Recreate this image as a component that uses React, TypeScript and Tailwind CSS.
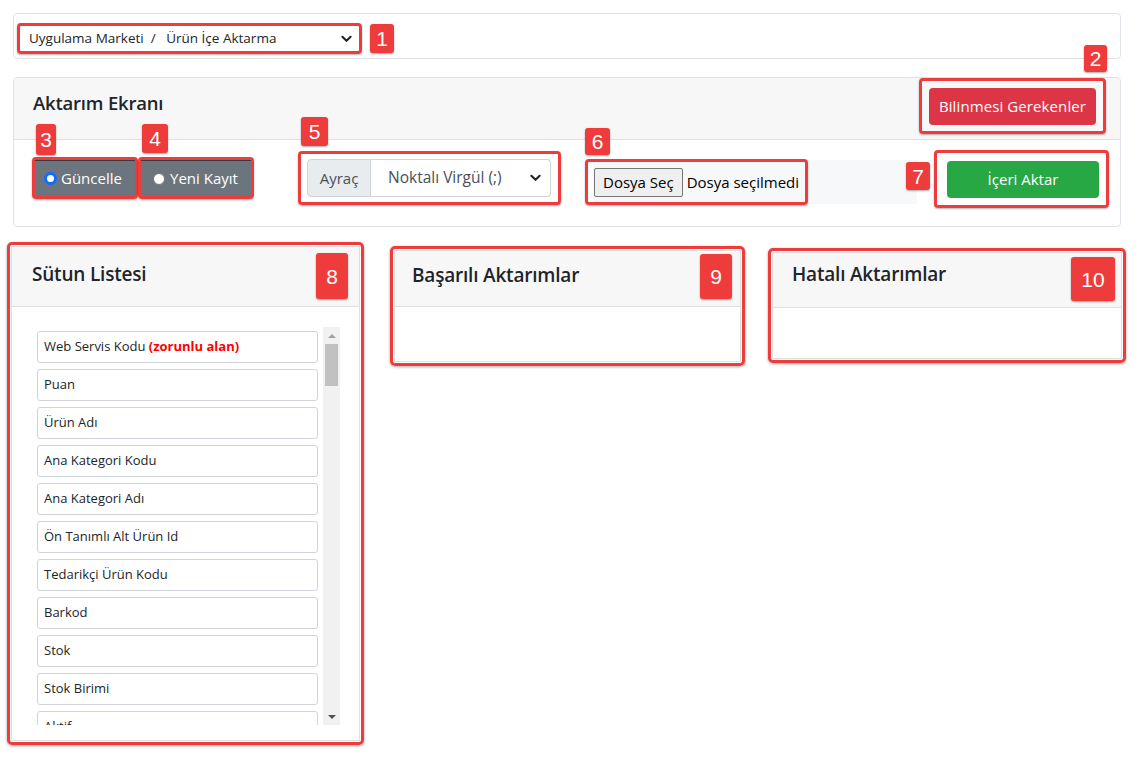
import React from "react";

const Badge = ({ n, className }: { n: string; className: string }) => (
  <div
    className={
      "absolute flex items-center justify-center rounded-[3px] bg-[#ee3b3b] text-white text-[21px] leading-none shadow-[0_1px_2px_rgba(0,0,0,0.35)] " +
      className
    }
    style={{ fontFamily: '"Liberation Sans", Arial, sans-serif' }}
  >
    {n}
  </div>
);

const items = [
  "Puan",
  "Ürün Adı",
  "Ana Kategori Kodu",
  "Ana Kategori Adı",
  "Ön Tanımlı Alt Ürün Id",
  "Tedarikçi Ürün Kodu",
  "Barkod",
  "Stok",
  "Stok Birimi",
  "Aktif",
];

const Chevron = () => (
  <svg width="11" height="8" viewBox="0 0 12 8">
    <path d="M1.5 1.5 6 6l4.5-4.5" fill="none" stroke="#222" strokeWidth="2.2" strokeLinecap="round" strokeLinejoin="round" />
  </svg>
);

export default function App() {
  return (
    <div
      className="w-[1137px] h-[764px] bg-white text-[#212529] overflow-hidden relative"
      style={{ fontFamily: '"Open Sans", "Noto Sans", sans-serif' }}
    >
      {/* Top breadcrumb card */}
      <div className="ml-[13px] mt-[13px] w-[1108px] h-[46px] border border-[#dee2e6] rounded-[4px] px-[3px] pt-[9px]">
        <div className="relative w-[345px] h-[31px] border-[3px] border-[#ee3b3b] rounded-[4px] flex items-center justify-between pl-[9px] pr-[7px] shadow-[0_1px_2px_rgba(0,0,0,0.3)]">
          <span className="text-[13.5px] whitespace-pre">Uygulama Marketi  /   Ürün İçe Aktarma</span>
          <Chevron />
          <Badge n="1" className="left-[350px] top-[-2px] w-[24px] h-[29px]" />
        </div>
      </div>

      {/* Aktarım Ekranı card */}
      <div className="ml-[13px] mt-[18px] w-[1108px] h-[150px] border border-[#dee2e6] rounded-[4px] flex flex-col">
        <div className="h-[62px] bg-[#f7f7f7] border-b border-[#dfdfdf] flex items-center justify-between pl-[19px] pr-[14px] rounded-t-[4px]">
          <h2 className="text-[18.5px] font-semibold tracking-[-0.2px] mt-[-11px]">Aktarım Ekranı</h2>
          <div className="relative mt-[-5px] w-[187px] h-[56px] border-[3px] border-[#ee3b3b] rounded-[4px] flex items-center justify-center shadow-[0_1px_2px_rgba(0,0,0,0.3)]">
            <button className="w-[167px] h-[37px] bg-[#dc3545] text-white text-[15px] rounded-[4px] tracking-[0.1px]">
              Bilinmesi Gerekenler
            </button>
            <Badge n="2" className="left-[162px] top-[-36px] w-[23px] h-[27px]" />
          </div>
        </div>
        <div className="flex-1 flex items-start pl-[18px] relative">
          {/* radio buttons */}
          <div className="flex mt-[17px]">
            <div className="relative w-[106px] h-[42px] border-[3px] border-[#ee3b3b] rounded-[4px] shadow-[0_1px_2px_rgba(0,0,0,0.3)]">
              <div className="h-full bg-[#6c757d] border-t border-[#343a40] text-white flex items-center pl-[9px] gap-[4px] text-[15px]">
                <span className="w-[13px] h-[13px] rounded-full bg-white border-[3px] border-[#0d6efd] inline-block" />
                Güncelle
              </div>
              <Badge n="3" className="left-[1px] top-[-36px] w-[20px] h-[31px]" />
            </div>
            <div className="relative w-[116px] h-[42px] border-[3px] border-[#ee3b3b] rounded-[4px] shadow-[0_1px_2px_rgba(0,0,0,0.3)]">
              <div className="h-full bg-[#6c757d] border-t border-[#343a40] text-white flex items-center pl-[12px] gap-[5px] text-[15px]">
                <span className="w-[12px] h-[12px] rounded-full bg-white border border-[#767676] inline-block" />
                Yeni Kayıt
              </div>
              <Badge n="4" className="left-[1px] top-[-36px] w-[26px] h-[29px]" />
            </div>
          </div>

          {/* separator input group */}
          <div className="relative ml-[44px] mt-[11px] w-[263px] h-[54px] border-[3px] border-[#ee3b3b] rounded-[4px] flex items-center pl-[6px] shadow-[0_1px_2px_rgba(0,0,0,0.3)]">
            <div className="w-[64px] h-[38px] bg-[#e9ecef] border border-[#ced4da] rounded-l-[4px] flex items-center justify-center text-[15px] text-[#495057]">
              Ayraç
            </div>
            <div className="w-[180px] h-[38px] border border-l-0 border-[#ced4da] rounded-r-[4px] flex items-center justify-between pl-[17px] pr-[9px] text-[15.5px] text-[#495057]">
              <span>Noktalı Virgül (;)</span>
              <Chevron />
            </div>
            <Badge n="5" className="left-[0px] top-[-37px] w-[27px] h-[29px]" />
          </div>

          {/* file input */}
          <div className="relative ml-[32px] mt-[20px] w-[324px] h-[44px] bg-[#f7f8f9]">
            <div className="absolute left-[-8px] top-[-1px] w-[223px] h-[46px] border-[3px] border-[#ee3b3b] rounded-[4px] flex items-center pl-[6px] gap-[4px] text-[15px] shadow-[0_1px_2px_rgba(0,0,0,0.3)]">
              <button className="h-[29px] px-[8px] bg-[#efefef] border border-[#767676] rounded-[2px] text-[15px] text-black">
                Dosya Seç
              </button>
              <span className="text-[15px] text-black">Dosya seçilmedi</span>
              <Badge n="6" className="left-[-3px] top-[-34px] w-[25px] h-[27px]" />
            </div>
          </div>

          {/* import button */}
          <div className="relative ml-[17px] mt-[10px] w-[175px] h-[58px] border-[3px] border-[#ee3b3b] rounded-[4px] flex items-center pl-[10px] shadow-[0_1px_2px_rgba(0,0,0,0.3)]">
            <button className="w-[152px] h-[37px] bg-[#28a745] text-white text-[15px] rounded-[4px]">
              İçeri Aktar
            </button>
            <Badge n="7" className="left-[-31px] top-[9px] w-[24px] h-[28px]" />
          </div>
        </div>
      </div>

      {/* Bottom row */}
      <div className="flex items-start mt-[15px] ml-[7px]">
        {/* Sütun listesi */}
        <div className="w-[357px] h-[503px] border-[3px] border-[#ee3b3b] rounded-[5px] p-[1px] shadow-[0_1px_3px_rgba(0,0,0,0.35)]">
          <div className="h-full border border-[#dfdfdf] flex flex-col relative">
            <div className="h-[60px] bg-[#f7f7f7] border-b border-[#dfdfdf] flex items-center pl-[20px]">
              <h3 className="text-[19px] font-semibold tracking-[-0.2px] mt-[-5px]">Sütun Listesi</h3>
            </div>
            <Badge n="8" className="left-[304px] top-[6px] w-[32px] h-[46px]" />
            <div className="flex pl-[25px] pt-[20px]">
              <div className="w-[281px] h-[398px] overflow-hidden flex flex-col gap-[6px] pt-[4px]">
                <div className="h-[32px] shrink-0 border border-[#ced4da] rounded-[3px] flex items-center pl-[6px] text-[13px]">
                  Web Servis Kodu&nbsp;<b className="text-[#ff0000] font-bold">(zorunlu alan)</b>
                </div>
                {items.map((t) => (
                  <div key={t} className="h-[32px] shrink-0 border border-[#ced4da] rounded-[3px] flex items-center pl-[6px] text-[13px]">
                    {t}
                  </div>
                ))}
              </div>
              <div className="ml-[5px] w-[17px] h-[398px] bg-[#f1f1f1] flex flex-col items-center">
                <div className="h-[17px] flex items-center justify-center">
                  <div className="w-0 h-0 border-l-[4px] border-r-[4px] border-b-[4px] border-l-transparent border-r-transparent border-b-[#a3a3a3]" />
                </div>
                <div className="w-[13px] h-[42px] bg-[#c1c1c1]" />
                <div className="flex-1" />
                <div className="h-[17px] flex items-center justify-center">
                  <div className="w-0 h-0 border-l-[4px] border-r-[4px] border-t-[4px] border-l-transparent border-r-transparent border-t-[#505050]" />
                </div>
              </div>
            </div>
          </div>
        </div>

        {/* Başarılı */}
        <div className="ml-[26px] mt-[4px] w-[355px] h-[120px] border-[3px] border-[#ee3b3b] rounded-[5px] p-[1px] shadow-[0_1px_3px_rgba(0,0,0,0.35)]">
          <div className="h-full border border-[#dfdfdf] relative">
            <div className="h-[56px] bg-[#f7f7f7] border-b border-[#dfdfdf] flex items-center pl-[17px]">
              <h3 className="text-[19px] font-semibold tracking-[-0.2px] mt-[-6px]">Başarılı Aktarımlar</h3>
            </div>
            <Badge n="9" className="left-[305px] top-[3px] w-[32px] h-[45px]" />
          </div>
        </div>

        {/* Hatalı */}
        <div className="ml-[23px] mt-[6px] w-[358px] h-[115px] border-[3px] border-[#ee3b3b] rounded-[5px] p-[1px] shadow-[0_1px_3px_rgba(0,0,0,0.35)]">
          <div className="h-full border border-[#dfdfdf] relative">
            <div className="h-[55px] bg-[#f7f7f7] border-b border-[#dfdfdf] flex items-center pl-[19px]">
              <h3 className="text-[19px] font-semibold tracking-[-0.2px] mt-[-11px]">Hatalı Aktarımlar</h3>
            </div>
            <Badge n="10" className="left-[298px] top-[4px] w-[44px] h-[44px]" />
          </div>
        </div>
      </div>
    </div>
  );
}
